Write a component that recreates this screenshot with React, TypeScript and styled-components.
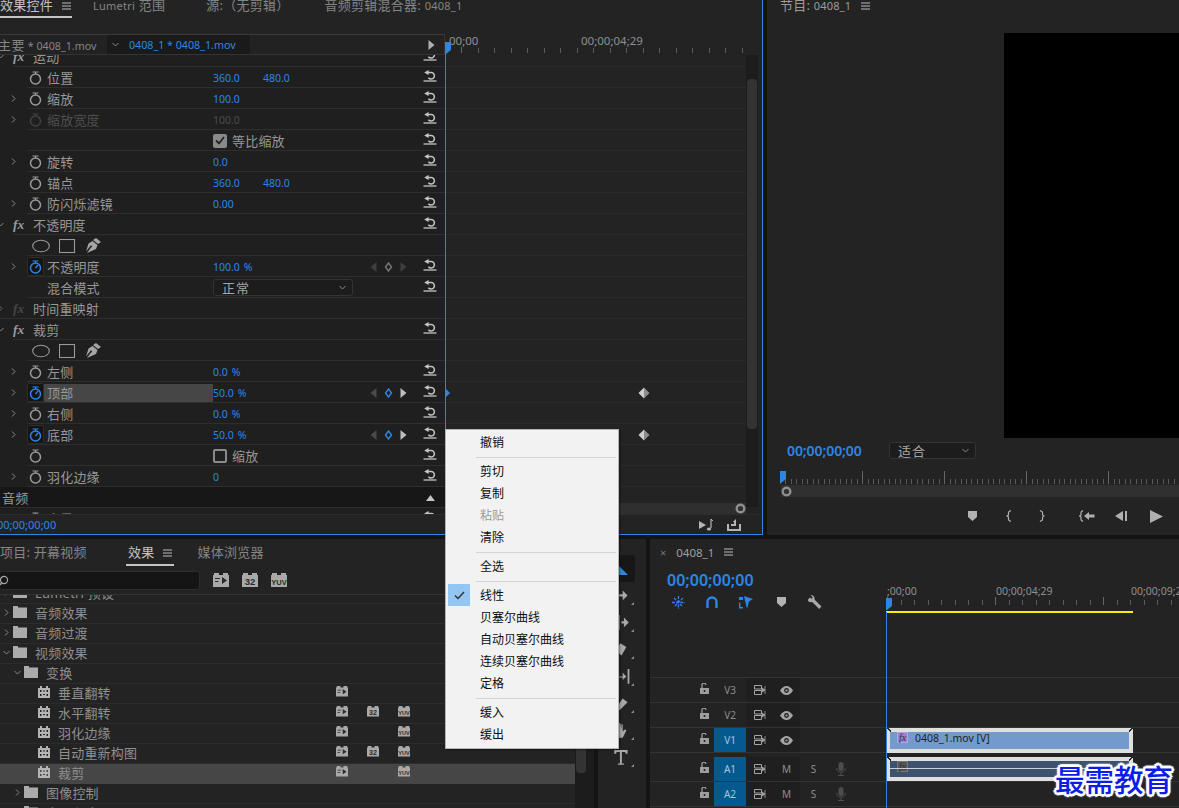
import React from "react";
import styled, { createGlobalStyle } from "styled-components";

const BLUE = "#2b86e6";

const Global = createGlobalStyle`
  html, body { margin: 0; padding: 0; background: #141414; overflow: hidden; }
  #root { width: 1179px; height: 808px; overflow: hidden; }
  * { box-sizing: border-box; }
`;

const Page = styled.div`
  position: relative;
  width: 1179px;
  height: 808px;
  overflow: hidden;
  background: #141414;
  color: #979797;
  font-family: "Noto Sans", "Noto Sans CJK SC", sans-serif;
  font-size: 13px;
  display: flex;
  flex-direction: column;
  gap: 4px;
`;
const TopRow = styled.div`
  display: flex;
  gap: 4px;
  height: 535px;
  flex: none;
`;
const BottomRow = styled.div`
  display: flex;
  gap: 4px;
  height: 269px;
  flex: none;
`;
const Panel = styled.section<{ $w?: number; $focus?: boolean }>`
  position: relative;
  display: flex;
  flex-direction: column;
  overflow: hidden;
  background: #232323;
  flex: ${(p) => (p.$w ? `0 0 ${p.$w}px` : "1 1 0")};
  ${(p) => (p.$focus ? `border-right: 1px solid ${BLUE}; border-bottom: 1px solid ${BLUE};` : "")}
`;

/* ---------- tabs ---------- */
const TabBar = styled.div<{ $h: number; $top: number }>`
  height: ${(p) => p.$h}px;
  flex: none;
  display: flex;
  align-items: flex-start;
  margin-top: ${(p) => p.$top}px;
  white-space: nowrap;
`;
const Tab = styled.div<{ $ml?: number; $on?: boolean; $pad?: number; $h?: number }>`
  display: flex;
  align-items: flex-start;
  gap: 9px;
  height: ${(p) => p.$h ?? 22}px;
  margin-left: ${(p) => p.$ml ?? 0}px;
  padding: 0 ${(p) => p.$pad ?? 0}px;
  font-size: 13px;
  line-height: 18px;
  letter-spacing: 0.25px;
  color: ${(p) => (p.$on ? "#c2c2c2" : "#858585")};
  border-bottom: 2px solid ${(p) => (p.$on ? "#c4c4c4" : "transparent")};
`;
const MiniNum = styled.span`
  font-size: 11px;
`;
const TabGlyph = styled.span`
  display: flex;
  padding-top: 6px;
`;
const MenuGlyph = () => (
  <svg width="9" height="8" viewBox="0 0 9 8">
    <path d="M0 1h9M0 4h9M0 7h9" stroke="#bdbdbd" strokeWidth="1" />
  </svg>
);

/* ---------- effect controls ---------- */
const FxBody = styled.div`
  flex: 1 1 0;
  min-height: 0;
  display: flex;
`;
const FxLeft = styled.div`
  width: 445px;
  flex: none;
  display: flex;
  flex-direction: column;
  background: #1f1f1f;
  overflow: hidden;
`;
const SourceHead = styled.div`
  height: 21px;
  flex: none;
  display: flex;
  align-items: center;
  background: #222;
  border-top: 1px solid #3a3a3a;
  border-bottom: 1px solid #333;
  border-right: 1px solid #333;
  white-space: nowrap;
`;
const SourceMaster = styled.div`
  width: 109px;
  flex: none;
  margin-left: -2px;
  color: #858585;
  font-size: 10.7px;
`;
const SourceCjk = styled.span`
  font-size: 13px;
  letter-spacing: 0.5px;
`;
const SourceActive = styled.div`
  width: 143px;
  height: 100%;
  flex: none;
  display: flex;
  align-items: center;
  gap: 10px;
  padding-left: 5px;
  background: #1a1a1a;
  color: ${BLUE};
  font-size: 10.7px;
`;
const HeadArrow = styled.div`
  margin-left: auto;
  margin-right: 9px;
  display: flex;
`;
const RowList = styled.div`
  flex: 1 1 0;
  min-height: 0;
  overflow: hidden;
`;
const RowScroll = styled.div`
  margin-top: -9px;
`;
const Row = styled.div<{ $inset: number; $dark?: boolean }>`
  height: 21px;
  display: flex;
  align-items: center;
  background: ${(p) => (p.$dark ? "#171717" : "transparent")}
    linear-gradient(#2e2e2e, #2e2e2e) right bottom / calc(100% - ${(p) => p.$inset}px) 1px no-repeat;
`;
const Lead = styled.div<{ $w: number }>`
  width: ${(p) => p.$w}px;
  flex: none;
  display: flex;
  align-items: center;
  justify-content: flex-end;
  padding-right: 10px;
`;
const SectionLead = styled.div`
  width: 30px;
  flex: none;
  display: flex;
  align-items: center;
  gap: 9px;
  margin-left: -3px;
`;
const FxMark = styled.span<{ $dim?: boolean }>`
  font-family: "Liberation Serif", serif;
  font-style: italic;
  font-weight: 700;
  font-size: 13.5px;
  line-height: 1;
  color: ${(p) => (p.$dim ? "#454545" : "#9a9a9a")};
`;
const SectionLabel = styled.div`
  flex: 1 1 0;
  font-size: 13px;
  letter-spacing: 0.2px;
  margin-left: 6px;
  color: #979797;
`;
const PlainLabel = styled.div`
  flex: 1 1 0;
  font-size: 13px;
  letter-spacing: 0.2px;
  margin-left: 2px;
  color: #979797;
`;
const WatchSlot = styled.div<{ $on?: boolean }>`
  width: 17px;
  height: 19px;
  flex: none;
  display: flex;
  align-items: center;
  justify-content: center;
  border-radius: 2px;
  background: ${(p) => (p.$on ? "#151515" : "transparent")};
  border: 1px solid ${(p) => (p.$on ? "#2c2c2c" : "transparent")};
`;
const PropLabel = styled.div<{ $hi?: boolean; $dim?: boolean }>`
  width: 169px;
  height: 18px;
  flex: none;
  padding-left: 3px;
  line-height: 18px;
  font-size: 13px;
  letter-spacing: 0.2px;
  background: ${(p) => (p.$hi ? "#464646" : "transparent")};
  color: ${(p) => (p.$dim ? "#4e4e4e" : "#979797")};
`;
const ValueCell = styled.div`
  flex: 1 1 0;
  display: flex;
  align-items: center;
  white-space: nowrap;
`;
const Value = styled.span<{ $w?: number; $dim?: boolean }>`
  display: inline-block;
  width: ${(p) => (p.$w ? `${p.$w}px` : "auto")};
  font-size: 10.5px;
  color: ${(p) => (p.$dim ? "#4b4b4b" : BLUE)};
`;
const Percent = styled.span`
  margin-left: 4px;
  font-size: 10.5px;
  color: ${BLUE};
`;
const CheckWrap = styled.div`
  display: flex;
  align-items: center;
  gap: 5px;
  font-size: 13px;
  letter-spacing: 0.2px;
  color: #979797;
`;
const CheckBox = styled.span<{ $on?: boolean }>`
  width: 14px;
  height: 14px;
  display: flex;
  align-items: center;
  justify-content: center;
  border: 2px solid #8a8a8a;
  border-radius: 2px;
  background: ${(p) => (p.$on ? "#8a8a8a" : "transparent")};
`;
const NavCell = styled.div`
  width: 50px;
  flex: none;
  display: flex;
  align-items: center;
  padding-left: 5px;
  gap: 7px;
`;
const ResetCell = styled.div`
  width: 30px;
  flex: none;
  display: flex;
  justify-content: center;
  padding-bottom: 4px;
`;
const UpCell = styled.div`
  width: 30px;
  flex: none;
  display: flex;
  justify-content: center;
`;
const MaskTools = styled.div`
  display: flex;
  align-items: center;
  gap: 9px;
  padding-left: 32px;
`;
const Select = styled.div<{ $w: number }>`
  width: ${(p) => p.$w}px;
  height: 17px;
  display: flex;
  align-items: center;
  justify-content: space-between;
  padding: 0 6px 0 8px;
  border: 1px solid #333;
  border-radius: 3px;
  background: #1c1c1c;
  font-size: 13px;
  letter-spacing: 1px;
  color: #a5a5a5;
`;
const FxRight = styled.div`
  position: relative;
  flex: 1 1 0;
  display: flex;
  flex-direction: column;
  min-width: 0;
`;
const SmallRuler = styled.div`
  height: 21px;
  flex: none;
  display: flex;
  flex-direction: column;
  overflow: hidden;
`;
const RulerLabels = styled.div<{ $pl: number; $size: number }>`
  display: flex;
  padding-left: ${(p) => p.$pl}px;
  height: 12px;
  margin-top: 1px;
  font-size: ${(p) => p.$size}px;
  line-height: 12px;
  color: #8f8f8f;
  white-space: nowrap;
`;
const RulerLabel = styled.span<{ $w: number }>`
  display: inline-block;
  width: ${(p) => p.$w}px;
  flex: none;
`;
const Lanes = styled.div`
  position: relative;
  flex: 1 1 0;
  min-height: 0;
  display: flex;
`;
const LaneGrid = styled.div`
  flex: 1 1 0;
  display: flex;
  flex-direction: column;
  background-image: linear-gradient(to bottom, transparent 20px, #2a2a2a 20px);
  background-size: 100% 21px;
  background-position: 0 -9px;
`;
const LaneSpace = styled.div`
  flex: 1 1 0;
`;
const HScroll = styled.div`
  height: 11px;
  flex: none;
  background: #2f2f2f;
  display: flex;
  align-items: center;
  justify-content: flex-end;
`;
const VTrack = styled.div`
  width: 12px;
  flex: none;
  margin: 0 4px 7px 0;
  padding: 24px 1px 0;
  background: #1c1c1c;
`;
const VThumb = styled.div`
  height: 350px;
  border-radius: 4px;
  background: #333;
`;
const Footer = styled.div`
  height: 20px;
  flex: none;
  display: flex;
  align-items: center;
  gap: 13px;
  padding-right: 21px;
  background: #232323;
  border-top: 1px solid #2c2c2c;
`;
const FootTime = styled.div`
  margin-left: -3px;
  font-size: 11px;
  color: ${BLUE};
  margin-right: auto;
`;
const Playhead = styled.div<{ $x: number; $top: number; $h: number }>`
  position: absolute;
  left: ${(p) => p.$x}px;
  top: ${(p) => p.$top}px;
  width: 1px;
  height: ${(p) => p.$h}px;
  background: ${BLUE};
`;
const Pinned = styled.div<{ $x: number; $y: number }>`
  position: absolute;
  left: ${(p) => p.$x}px;
  top: ${(p) => p.$y}px;
  display: flex;
`;

/* ---------- program ---------- */
const ProgTabs = styled.div`
  height: 33px;
  flex: none;
  display: flex;
  gap: 10px;
  padding: 0 0 0 13px;
  align-items: flex-start;
  font-size: 13px;
  color: #9c9c9c;
  line-height: 11px;
`;
const ProgTitle = styled.span`
  letter-spacing: 0.2px;
`;
const GlyphBox = styled.span`
  display: flex;
  padding-top: 2px;
`;
const Video = styled.div`
  height: 405px;
  flex: none;
  display: flex;
  justify-content: flex-end;
`;
const VideoBlack = styled.div`
  width: 175px;
  background: #000;
`;
const ProgControls = styled.div`
  height: 26px;
  flex: none;
  display: flex;
  align-items: center;
  gap: 26px;
  padding: 0 0 2px 20px;
`;
const ProgTime = styled.div`
  font-size: 14px;
  font-weight: 600;
  color: ${BLUE};
  width: 76px;
  white-space: nowrap;
  letter-spacing: -0.1px;
`;
const ProgRuler = styled.div`
  position: relative;
  height: 21px;
  flex: none;
  margin-left: 13px;
  overflow: hidden;
`;
const Scrub = styled.div`
  height: 12px;
  flex: none;
  margin-left: 14px;
  background: #303030;
  display: flex;
  align-items: center;
`;
const Transport = styled.div`
  flex: 1 1 0;
  display: flex;
  align-items: center;
  padding-left: 197px;
`;
const TransportBtn = styled.div<{ $ml: number }>`
  width: 16px;
  flex: none;
  margin-left: ${(p) => p.$ml}px;
  display: flex;
  justify-content: center;
`;

/* ---------- effects panel ---------- */
const SearchRow = styled.div`
  height: 27px;
  flex: none;
  display: flex;
  align-items: flex-start;
  gap: 13px;
  padding-top: 4px;
`;
const SearchBox = styled.div`
  width: 201px;
  height: 19px;
  margin-left: -1px;
  flex: none;
  display: flex;
  align-items: center;
  border: 1px solid #2c2c2c;
  border-radius: 3px;
  background: #151515;
`;
const BadgeGroup = styled.div`
  display: flex;
  gap: 13px;
  padding-top: 2px;
`;
const EffectsBody = styled.div`
  flex: 1 1 0;
  min-height: 0;
  display: flex;
  border-top: 1px solid #333;
`;
const EffectsList = styled.div`
  flex: 1 1 0;
  min-width: 0;
  overflow: hidden;
`;
const EffectsScroll = styled.div`
  margin-top: -11px;
`;
const ERow = styled.div<{ $sel?: boolean }>`
  height: 20px;
  display: flex;
  align-items: center;
  padding-bottom: 3px;
  background: ${(p) => (p.$sel ? "#464646" : "transparent")};
  border-bottom: 1px solid ${(p) => (p.$sel ? "#464646" : "#2c2c2c")};
`;
const EIndent = styled.div<{ $w: number }>`
  width: ${(p) => p.$w}px;
  flex: none;
  display: flex;
  align-items: center;
  justify-content: flex-end;
  padding-right: 3px;
`;
const EName = styled.div<{ $w: number }>`
  width: ${(p) => p.$w}px;
  flex: none;
  font-size: 13px;
  letter-spacing: 0.2px;
  padding-left: 8px;
  white-space: nowrap;
  overflow: hidden;
  color: #8f8f8f;
`;
const EBadges = styled.div`
  display: flex;
  gap: 19px;
`;
const BadgeSlot = styled.div`
  width: 12px;
  height: 12px;
  flex: none;
  display: flex;
`;
const EScrollTrack = styled.div`
  width: 19px;
  flex: none;
  padding: 0 8px 0 1px;
  background: #1c1c1c;
`;
const EThumb = styled.div`
  height: 178px;
  background: #333;
  border-radius: 0 0 4px 4px;
`;

/* ---------- tools ---------- */
const ToolColumn = styled.div`
  flex: 1 1 0;
  display: flex;
  flex-direction: column;
  align-items: center;
  padding: 17px 2px 0 0;
`;
const ToolButton = styled.div<{ $on?: boolean }>`
  position: relative;
  width: 28px;
  height: 27px;
  flex: none;
  display: flex;
  align-items: center;
  justify-content: center;
  border-radius: 3px;
  background: ${(p) => (p.$on ? "#171717" : "transparent")};
  margin-top: ${(p) => (p.$on ? -1 : 0)}px;
`;
const ToolCorner = styled.span`
  position: absolute;
  right: 1px;
  bottom: 4px;
  display: flex;
`;

/* ---------- timeline ---------- */
const SeqTab = styled.div`
  height: 29px;
  flex: none;
  display: flex;
  align-items: center;
  gap: 10px;
  padding: 0 0 3px 10px;
  font-size: 11.5px;
  color: #a0a0a0;
`;
const Close = styled.span`
  font-size: 11px;
  color: #777;
`;
const SeqHead = styled.div`
  height: 45px;
  flex: none;
  display: flex;
`;
const SeqLeft = styled.div`
  width: 236px;
  flex: none;
  display: flex;
  flex-direction: column;
  padding-left: 17px;
`;
const SeqTime = styled.div`
  font-size: 16px;
  font-weight: 600;
  line-height: 24px;
  color: ${BLUE};
`;
const SeqTools = styled.div`
  display: flex;
  align-items: center;
  height: 20px;
  padding-left: 4px;
`;
const SeqTool = styled.div<{ $w: number }>`
  width: ${(p) => p.$w}px;
  flex: none;
  display: flex;
`;
const SeqRuler = styled.div`
  flex: 1 1 0;
  display: flex;
  flex-direction: column;
  position: relative;
  min-width: 0;
  padding-top: 16px;
`;
const Yellow = styled.div`
  height: 2px;
  width: 247px;
  background: #f5ee00;
  margin-top: auto;
`;
const BlankTracks = styled.div`
  height: 65px;
  flex: none;
  border-bottom: 1px solid #333;
`;
const Track = styled.div<{ $gap?: boolean }>`
  height: 25px;
  flex: none;
  display: flex;
  border-bottom: 1px solid #333;
  margin-top: ${(p) => (p.$gap ? 4 : 0)}px;
`;
const TrackHead = styled.div`
  width: 236px;
  flex: none;
  display: flex;
  align-items: center;
`;
const LockSlot = styled.div`
  width: 64px;
  flex: none;
  display: flex;
  justify-content: flex-end;
  padding-right: 5px;
  padding-bottom: 3px;
`;
const TrackId = styled.div<{ $on?: boolean }>`
  width: 32px;
  height: 100%;
  flex: none;
  display: flex;
  align-items: center;
  justify-content: center;
  font-size: 10px;
  background: ${(p) => (p.$on ? "#045a8c" : "transparent")};
  color: ${(p) => (p.$on ? "#a9c4d6" : "#8c8c8c")};
`;
const TrackBtn = styled.div<{ $w: number; $dark?: boolean }>`
  width: ${(p) => p.$w}px;
  height: 100%;
  flex: none;
  display: flex;
  align-items: center;
  justify-content: center;
  font-size: 10px;
  color: #8f8f8f;
  background: ${(p) => (p.$dark ? "#1f1f1f" : "transparent")};
`;
const Lane = styled.div`
  flex: 1 1 0;
  min-width: 0;
  padding-left: 1px;
`;
const Clip = styled.div<{ $audio?: boolean }>`
  position: relative;
  width: 246px;
  height: ${(p) => (p.$audio ? 24 : 25)}px;
  display: flex;
  align-items: flex-start;
  gap: 7px;
  padding: 0 0 0 7px;
  border: solid #dfdfdf;
  border-width: 4px 4px 4px 3px;
  background: ${(p) => (p.$audio ? "#3d526f" : "#729bcb")};
  color: #222;
  font-size: 10.5px;
  line-height: 12px;
  &::before,
  &::after {
    content: "";
    position: absolute;
    top: -4px;
    width: 4px;
    height: 4px;
    background: linear-gradient(45deg, transparent 40%, #222 40%, #222 65%, transparent 65%);
  }
  &::before {
    left: -3px;
  }
  &::after {
    right: -4px;
    transform: scaleX(-1);
  }
`;
const ClipFx = styled.span<{ $audio?: boolean }>`
  width: 11px;
  height: 11px;
  flex: none;
  display: flex;
  align-items: center;
  justify-content: center;
  font-family: "Liberation Serif", serif;
  font-style: italic;
  font-size: 10px;
  color: #333;
  border: 1px solid ${(p) => (p.$audio ? "#777" : "#b9a5dc")};
  background: ${(p) => (p.$audio ? "#555" : "#a07fd0")};
`;
const Wave = styled.div`
  position: absolute;
  left: 0;
  right: 0;
  top: 7px;
  height: 1px;
  background: #c9d0da;
`;
const Watermark = styled.div`
  position: absolute;
  left: 1055px;
  top: 758px;
  font-family: "Noto Sans CJK SC", sans-serif;
  font-weight: 500;
  font-size: 29.5px;
  line-height: 40px;
  white-space: nowrap;
  color: #0b1de6;
  text-shadow: 2px 0 0 #fff, -2px 0 0 #fff, 0 2px 0 #fff, 0 -2px 0 #fff, 2px 2px 0 #fff, -2px -2px 0 #fff,
    2px -2px 0 #fff, -2px 2px 0 #fff, 3px 0 1px #fff, -3px 0 1px #fff, 0 3px 1px #fff, 0 -3px 1px #fff;
`;

/* ---------- context menu ---------- */
const Menu = styled.div`
  position: absolute;
  left: 445px;
  top: 429px;
  width: 174px;
  height: 320px;
  padding: 1px 0 3px 0;
  background: #f2f2f2;
  border: 1px solid #b5b5b5;
  box-shadow: 1px 1px 2px rgba(0, 0, 0, 0.4);
  font-family: "Noto Sans CJK SC", sans-serif;
  font-size: 12px;
  color: #0d0d0d;
`;
const MenuItem = styled.div<{ $off?: boolean }>`
  height: 22px;
  display: flex;
  align-items: center;
  gap: 10px;
  padding-left: 2px;
  color: ${(p) => (p.$off ? "#9a9a9a" : "#0d0d0d")};
`;
const MenuLabel = styled.span`
  margin-top: -1px;
`;
const MenuCheck = styled.span<{ $on?: boolean }>`
  width: 22px;
  height: 22px;
  flex: none;
  display: flex;
  align-items: center;
  justify-content: center;
  background: ${(p) => (p.$on ? "#94c6f4" : "transparent")};
`;
const MenuSep = styled.div`
  height: 7px;
  margin: 0 2px 0 30px;
  background: linear-gradient(#d5d5d5, #d5d5d5) 0 4px / 100% 1px no-repeat;
`;

/* ---------- icons ---------- */
const Chevron = ({ open, c = "#8a8a8a" }: { open?: boolean; c?: string }) => (
  <svg width="7" height="7" viewBox="0 0 7 7">
    <path d={open ? "M0.5 2l3 3 3-3" : "M2 0.5l3 3-3 3"} fill="none" stroke={c} strokeWidth="1" />
  </svg>
);
const Stopwatch = ({ on, dim }: { on?: boolean; dim?: boolean }) => {
  const c = on ? "#2b86e6" : dim ? "#414141" : "#9a9a9a";
  return (
    <svg width="13" height="14" viewBox="0 0 13 14">
      <circle cx="6.5" cy="8" r="5" fill="none" stroke={c} strokeWidth="1.5" />
      <path d="M3.5 1h6M6.5 1v2" stroke={c} strokeWidth="1.2" />
      {on && <path d="M6.5 8l2.5-3" stroke={c} strokeWidth="1.2" />}
    </svg>
  );
};
const Reset = () => (
  <svg width="14" height="12" viewBox="0 0 14 12">
    <path d="M5 2.500h3.200a3.300 3.300 0 1 1-2.800 5.200" fill="none" stroke="#c4c4c4" strokeWidth="1.500" />
    <path d="M5.600 0v5L1.200 2.500z" fill="#c4c4c4" />
    <path d="M0.500 11h13" stroke="#c4c4c4" strokeWidth="1.300" />
  </svg>
);
const Tri = ({ dir, c }: { dir: "l" | "r"; c: string }) => (
  <svg width="7" height="10" viewBox="0 0 7 10">
    <path d={dir === "l" ? "M6.5 0v10L0.5 5z" : "M0.5 0v10l6-5z"} fill={c} />
  </svg>
);
const DotDiamond = ({ blue }: { blue?: boolean }) => (
  <svg width="9" height="10" viewBox="0 0 9 10">
    <path d="M4.5 1l3 4-3 4-3-4z" fill="none" stroke={blue ? "#2b86e6" : "#777"} strokeWidth="1.4" />
  </svg>
);
const Keyframe = () => (
  <svg width="12" height="12" viewBox="0 0 12 12">
    <path d="M6 0.5L11.5 6 6 11.5z" fill="#8c8c8c" />
    <path d="M6 0.5L0.5 6 6 11.5z" fill="#cfcfcf" />
  </svg>
);
const Ellipse = () => (
  <svg width="18" height="14" viewBox="0 0 18 14">
    <ellipse cx="9" cy="7" rx="8.3" ry="5.8" fill="none" stroke="#9a9a9a" strokeWidth="1.1" />
  </svg>
);
const Rect = () => (
  <svg width="17" height="14" viewBox="0 0 17 14">
    <rect x="0.5" y="0.5" width="15" height="13" fill="none" stroke="#9a9a9a" strokeWidth="1.1" />
  </svg>
);
const Pen = () => (
  <svg width="17" height="17" viewBox="0 0 17 17">
    <path d="M11 1l5 4-3 2-5-4z M7.5 4l5 4-1.5 4-9 4 4-5.5a1 1 0 1 0 -1-1L1 14.5 3.5 6.5z" fill="#a5a5a5" />
  </svg>
);
const Folder = () => (
  <svg width="14" height="12" viewBox="0 0 14 12">
    <path d="M0 0h5v1.5h9V12H0z" fill="#ababab" />
  </svg>
);
const Film = () => (
  <svg width="12" height="12" viewBox="0 0 12 12">
    <path
      d="M2 0h2v2h4V0h2v2h2v10H0V2h2z M2 4v2h1.500V4z M2 8v2h1.500V8z M8.500 4v2H10V4z M8.500 8v2H10V8z M5 4.500v1h2v-1z M5 8v1h2V8z"
      fill="#b4b4b4"
      fillRule="evenodd"
    />
  </svg>
);
const Badge = ({ kind, s }: { kind: "a" | "32" | "y"; s: number }) => (
  <svg width={s} height={s * 0.875} viewBox="0 0 16 14">
    <path d="M0 2h1V0h5v2h4V0h5v2h1v12H0z" fill="#a9a9a9" />
    {kind === "a" && <path d="M9 4v7l5-3.5z M2 5h5v1H2z M2 8h3.5v1H2z" fill="#2a2a2a" />}
    {kind === "32" && (
      <text x="8" y="11.5" textAnchor="middle" fontSize="9.5" fontWeight="700" fontFamily="Liberation Sans" fill="#2a2a2a">
        32
      </text>
    )}
    {kind === "y" && (
      <text x="8" y="11.5" textAnchor="middle" fontSize="7.5" fontWeight="700" fontFamily="Liberation Sans" fill="#2a2a2a">
        YUV
      </text>
    )}
  </svg>
);
const Ticks = ({ w, h, step, major, start = 0, c = "#666" }: { w: number; h: number; step: number; major: number; start?: number; c?: string }) => {
  const lines = [];
  for (let i = 0; start + i * step < w; i++) {
    const x = Math.round(start + i * step) + 0.5;
    const big = i % major === 0;
    lines.push(<path key={i} d={`M${x} ${big ? 0 : h - 5}V${h}`} stroke={big ? "#666" : c} strokeWidth="1" />);
  }
  return (
    <svg width={w} height={h} viewBox={`0 0 ${w} ${h}`}>
      {lines}
    </svg>
  );
};
const HeadMark = () => (
  <svg width="6" height="12" viewBox="0 0 6 12">
    <path d="M0 0h6v8L1 12H0z" fill="#2b86e6" />
  </svg>
);
const Circle = () => (
  <svg width="11" height="11" viewBox="0 0 11 11">
    <circle cx="5.5" cy="5.5" r="3.8" fill="none" stroke="#8f8f8f" strokeWidth="2.4" />
  </svg>
);
const Marker = () => (
  <svg width="9" height="10" viewBox="0 0 9 10">
    <path d="M0 0h9v6l-4.500 4L0 6z" fill="#b2b2b2" />
  </svg>
);
const BraceL = () => (
  <svg width="7" height="12" viewBox="0 0 7 12">
    <path d="M5 0.5L2.5 2v3L1 6l1.5 1v3L5 11.5" fill="none" stroke="#b0b0b0" strokeWidth="1.2" />
  </svg>
);
const BraceR = () => (
  <svg width="7" height="12" viewBox="0 0 7 12">
    <path d="M2 0.5L4.5 2v3L6 6 4.5 7v3L2 11.5" fill="none" stroke="#b0b0b0" strokeWidth="1.2" />
  </svg>
);
const GoIn = () => (
  <svg width="16" height="12" viewBox="0 0 16 12">
    <path d="M4 0.5L2 2v3L0.7 6 2 7v3l2 1.5" fill="none" stroke="#b0b0b0" strokeWidth="1.2" />
    <path d="M5 6l5-4v2.600h5.500v2.800H10V10z" fill="#b0b0b0" />
  </svg>
);
const StepBack = () => (
  <svg width="13" height="10" viewBox="0 0 13 10">
    <path d="M8 0v10L0 5z" fill="#b0b0b0" />
    <path d="M10 0h2v10h-2z" fill="#b0b0b0" />
  </svg>
);
const Play = () => (
  <svg width="13" height="13" viewBox="0 0 13 13">
    <path d="M0 0l13 6.500L0 13z" fill="#b0b0b0" />
  </svg>
);
const Magnifier = () => (
  <svg width="10" height="12" viewBox="0 0 10 12">
    <circle cx="4" cy="5" r="3.600" fill="none" stroke="#a5a5a5" strokeWidth="1.200" />
    <path d="M1.500 8L0 10" stroke="#a5a5a5" strokeWidth="1.400" />
  </svg>
);
const PlayNote = () => (
  <svg width="15" height="12" viewBox="0 0 15 12">
    <path d="M0 2v8l7-4z" fill="#b5b5b5" />
    <path d="M12 0v9" stroke="#b5b5b5" strokeWidth="1.200" />
    <ellipse cx="10" cy="10" rx="2.200" ry="1.600" fill="#b5b5b5" />
    <path d="M12 0l2 2" stroke="#b5b5b5" />
  </svg>
);
const Export = () => (
  <svg width="14" height="12" viewBox="0 0 14 12">
    <path d="M0 5h2v5h10V5h2v7H0z" fill="#b5b5b5" />
    <path d="M4 5h3V3H5.800L9 0v7H4z" fill="#b5b5b5" />
  </svg>
);
const Lock = () => (
  <svg width="9" height="11" viewBox="0 0 9 11">
    <path d="M0 5h9v6H0z M3.700 7v2h1.600V7z" fill="#9e9e9e" fillRule="evenodd" />
    <path d="M2 5V2.500a2 2 0 0 1 4-.7" fill="none" stroke="#9e9e9e" strokeWidth="1.300" />
  </svg>
);
const Sync = () => (
  <svg width="12" height="10" viewBox="0 0 12 10">
    <path d="M0.500 0.500h7v3.500h-7z M0.500 5.500h7v4h-7z" fill="none" stroke="#a5a5a5" />
    <path d="M8 3l3 2-3 2z M11 1v8" fill="#a5a5a5" stroke="#a5a5a5" strokeWidth="0.800" />
  </svg>
);
const Eye = () => (
  <svg width="13" height="9" viewBox="0 0 13 9">
    <path d="M0 4.500C2 1.500 4 0 6.500 0S11 1.500 13 4.500C11 7.500 9 9 6.500 9S2 7.500 0 4.500z" fill="#a5a5a5" />
    <circle cx="6.500" cy="4.500" r="2.400" fill="#232323" />
    <circle cx="6.500" cy="4.500" r="1.100" fill="#a5a5a5" />
  </svg>
);
const Mic = () => (
  <svg width="10" height="14" viewBox="0 0 10 14">
    <rect x="2.500" y="0" width="5" height="9" rx="2.500" fill="#4d4d4d" />
    <path d="M0.700 6a4.300 4.300 0 0 0 8.600 0M5 10.500V13M2 13.500h6" fill="none" stroke="#4d4d4d" />
  </svg>
);
const Nest = () => (
  <svg width="15" height="13" viewBox="0 0 15 13">
    <path d="M1 6.500h13M7.500 0v13M3 2l9 9M12 2l-9 9" stroke={BLUE} strokeWidth="1.300" strokeDasharray="3 1.200" />
  </svg>
);
const Magnet = () => (
  <svg width="12" height="12" viewBox="0 0 12 12">
    <path d="M1.500 12V6a4.500 4.500 0 0 1 9 0v6" fill="none" stroke={BLUE} strokeWidth="2.400" />
  </svg>
);
const LinkSel = () => (
  <svg width="14" height="13" viewBox="0 0 14 13">
    <path d="M5 0l9 3-4 2.500L8 13z" fill={BLUE} />
    <path d="M0 1h4v3H0z M0 6.500h1.400V11H4v1.500H0z" fill={BLUE} />
  </svg>
);
const Wrench = () => (
  <svg width="15" height="15" viewBox="0 0 15 15">
    <path d="M1 4.500L3 2.500l2 1.500L5.500 1.800 3.500 0.500C6 -0.300 8 1.500 7.500 4.500L14.500 11.500l-2.300 2.500L5.200 7C2.700 7.500 0.700 6.500 1 4.500z" fill="#a8a8a8" />
  </svg>
);
const ToolTri = () => (
  <svg width="3" height="3" viewBox="0 0 3 3">
    <path d="M3 0v3H0z" fill="#8a8a8a" />
  </svg>
);
const ToolIcon = ({ n }: { n: number }) => {
  const paths = [
    "",
    "M0 5h8V2l4 4-4 4V7H0z",
    "M0 5h4V0h1.500v12H4V7H0z M7 5h2V2l4 4-4 4V7H7z",
    "M2 7l4-6 5 3-4 7z",
    "M0 6h8V3l3 3-3 3V7H0z M12 0h1.500v12H12z",
    "M3 9l5-7 4 3-6 6-4 2z",
    "M2 8L1 4l2 2V1h1l1 4V0h1l1 5V1h1v6l2-2 1 1-3 6H4z",
    "M1 0h11v3h-1.500L10 1.500H7.300V11H9v1H4v-1h1.700V1.500H3L2.500 3H1z",
  ];
  return (
    <svg width="17" height="16" viewBox="0 0 14 13">
      <path d={paths[n]} fill="#a8a8a8" />
    </svg>
  );
};
const SelectArrow = () => (
  <svg width="14" height="14" viewBox="0 0 14 14">
    <path d="M1 0l13 13H1z" fill={BLUE} />
  </svg>
);

/* ---------- data ---------- */
type PropRow = {
  kind: "prop" | "section" | "mask" | "check" | "blend" | "plain";
  label?: string;
  chev?: boolean;
  open?: boolean;
  on?: boolean;
  hi?: boolean;
  dim?: boolean;
  vals?: string[];
  pct?: boolean;
  nav?: "blue" | "gray";
  noWatch?: boolean;
  checked?: boolean;
  noReset?: boolean;
};

const rows: PropRow[] = [
  { kind: "section", label: "运动", open: true },
  { kind: "prop", label: "位置", vals: ["360.0", "480.0"] },
  { kind: "prop", label: "缩放", chev: true, vals: ["100.0"] },
  { kind: "prop", label: "缩放宽度", chev: true, dim: true, vals: ["100.0"] },
  { kind: "check", label: "等比缩放", checked: true, noWatch: true },
  { kind: "prop", label: "旋转", chev: true, vals: ["0.0"] },
  { kind: "prop", label: "锚点", vals: ["360.0", "480.0"] },
  { kind: "prop", label: "防闪烁滤镜", chev: true, vals: ["0.00"] },
  { kind: "section", label: "不透明度", open: true },
  { kind: "mask" },
  { kind: "prop", label: "不透明度", chev: true, on: true, vals: ["100.0"], pct: true, nav: "gray" },
  { kind: "blend", label: "混合模式" },
  { kind: "section", label: "时间重映射", dim: true, noReset: true },
  { kind: "section", label: "裁剪", open: true },
  { kind: "mask" },
  { kind: "prop", label: "左侧", chev: true, vals: ["0.0"], pct: true },
  { kind: "prop", label: "顶部", chev: true, on: true, hi: true, vals: ["50.0"], pct: true, nav: "blue" },
  { kind: "prop", label: "右侧", chev: true, vals: ["0.0"], pct: true },
  { kind: "prop", label: "底部", chev: true, on: true, vals: ["50.0"], pct: true, nav: "blue" },
  { kind: "check", label: "缩放" },
  { kind: "prop", label: "羽化边缘", chev: true, vals: ["0"] },
  { kind: "plain", label: "音频" },
  { kind: "prop", label: "音量", vals: [] },
];

const EffectRow = ({ r }: { r: PropRow }) => {
  if (r.kind === "plain")
    return (
      <Row $inset={0} $dark>
        <PlainLabel>{r.label}</PlainLabel>
        <UpCell>
          <svg width="9" height="6" viewBox="0 0 9 6">
            <path d="M4.500 0L9 6H0z" fill="#c4c4c4" />
          </svg>
        </UpCell>
      </Row>
    );
  if (r.kind === "section")
    return (
      <Row $inset={r.dim ? 0 : 13}>
        <SectionLead>
          <Chevron open={r.open} c={r.dim ? "#666" : "#8a8a8a"} />
          <FxMark $dim={r.dim}>fx</FxMark>
        </SectionLead>
        <SectionLabel>{r.label}</SectionLabel>
        {!r.noReset && (
          <ResetCell>
            <Reset />
          </ResetCell>
        )}
      </Row>
    );
  if (r.kind === "mask")
    return (
      <Row $inset={27}>
        <MaskTools>
          <Ellipse />
          <Rect />
          <Pen />
        </MaskTools>
      </Row>
    );
  return (
    <Row $inset={27}>
      <Lead $w={27}>{r.chev && <Chevron />}</Lead>
      <WatchSlot $on={r.on}>{!r.noWatch && r.kind !== "blend" && <Stopwatch on={r.on} dim={r.dim} />}</WatchSlot>
      <PropLabel $hi={r.hi} $dim={r.dim}>
        {r.kind === "check" ? "" : r.label}
      </PropLabel>
      <ValueCell>
        {r.kind === "check" && (
          <CheckWrap>
            <CheckBox $on={r.checked}>
              {r.checked && (
                <svg width="10" height="9" viewBox="0 0 10 9">
                  <path d="M1 4.500l3 3 5-6.500" fill="none" stroke="#222" strokeWidth="1.800" />
                </svg>
              )}
            </CheckBox>
            {r.label}
          </CheckWrap>
        )}
        {r.kind === "blend" && (
          <Select $w={140}>
            正常
            <Chevron open />
          </Select>
        )}
        {r.vals?.map((v, i) => (
          <Value key={i} $w={r.vals!.length > 1 ? 50 : 0} $dim={r.dim}>
            {v}
          </Value>
        ))}
        {r.pct && <Percent>%</Percent>}
      </ValueCell>
      {r.nav && (
        <NavCell>
          <Tri dir="l" c={r.nav === "blue" ? "#4a4a4a" : "#3f3f3f"} />
          <DotDiamond blue={r.nav === "blue"} />
          <Tri dir="r" c={r.nav === "blue" ? "#bdbdbd" : "#3f3f3f"} />
        </NavCell>
      )}
      <ResetCell>
        <Reset />
      </ResetCell>
    </Row>
  );
};

type ERowData = {
  label: string;
  level: 0 | 1 | 2;
  open?: boolean;
  sel?: boolean;
  badges?: ("a" | "32" | "y" | "")[];
};
const eRows: ERowData[] = [
  { label: "Lumetri 预设", level: 0 },
  { label: "音频效果", level: 0 },
  { label: "音频过渡", level: 0 },
  { label: "视频效果", level: 0, open: true },
  { label: "变换", level: 1, open: true },
  { label: "垂直翻转", level: 2, badges: ["a", "", ""] },
  { label: "水平翻转", level: 2, badges: ["a", "32", "y"] },
  { label: "羽化边缘", level: 2, badges: ["a", "", "y"] },
  { label: "自动重新构图", level: 2, badges: ["a", "32", "y"] },
  { label: "裁剪", level: 2, sel: true, badges: ["a", "", "y"] },
  { label: "图像控制", level: 1 },
  { label: "实用程序", level: 1 },
];
const EffectItem = ({ r }: { r: ERowData }) => {
  const indent = r.level === 0 ? 13 : r.level === 1 ? 24 : 38;
  const nameW = 336 - indent - (r.level === 2 ? 12 : 14);
  return (
    <ERow $sel={r.sel}>
      <EIndent $w={indent}>{r.level < 2 && <Chevron open={r.open} />}</EIndent>
      {r.level === 2 ? <Film /> : <Folder />}
      <EName $w={nameW}>{r.label}</EName>
      {r.badges && (
        <EBadges>
          {r.badges.map((b, i) => (
            <BadgeSlot key={i}>{b && <Badge kind={b} s={12} />}</BadgeSlot>
          ))}
        </EBadges>
      )}
    </ERow>
  );
};

const tracks = [
  { id: "V3", v: true },
  { id: "V2", v: true },
  { id: "V1", v: true, on: true },
  { id: "A1", on: true, gap: true },
  { id: "A2", on: true },
];

const menu: (string | { t: string; off?: boolean; on?: boolean } | null)[] = [
  "撤销",
  null,
  "剪切",
  "复制",
  { t: "粘贴", off: true },
  "清除",
  null,
  "全选",
  null,
  { t: "线性", on: true },
  "贝塞尔曲线",
  "自动贝塞尔曲线",
  "连续贝塞尔曲线",
  "定格",
  null,
  "缓入",
  "缓出",
];

export default function App() {
  return (
    <Page>
      <Global />
      <TopRow>
        <Panel $w={763} $focus>
          <TabBar $h={38} $top={-4}>
            <Tab $on $ml={-1} $pad={1}>
              效果控件
              <TabGlyph>
                <MenuGlyph />
              </TabGlyph>
            </Tab>
            <Tab $ml={21}>
              <span>
                <MiniNum>Lumetri</MiniNum> 范围
              </span>
            </Tab>
            <Tab $ml={41}>源:（无剪辑）</Tab>
            <Tab $ml={35}>
              <span>
                音频剪辑混合器: <MiniNum>0408_1</MiniNum>
              </span>
            </Tab>
          </TabBar>
          <FxBody>
            <FxLeft>
              <SourceHead>
                <SourceMaster>
                  <SourceCjk>主要</SourceCjk> * 0408_1.mov
                </SourceMaster>
                <SourceActive>
                  <Chevron open />
                  0408_1 * 0408_1.mov
                </SourceActive>
                <HeadArrow>
                  <Tri dir="r" c="#b0b0b0" />
                </HeadArrow>
              </SourceHead>
              <RowList>
                <RowScroll>
                  {rows.map((r, i) => (
                    <EffectRow key={i} r={r} />
                  ))}
                </RowScroll>
              </RowList>
            </FxLeft>
            <FxRight>
              <SmallRuler>
                <RulerLabels $pl={4} $size={11.5}>
                  <RulerLabel $w={132}>00;00</RulerLabel>
                  <RulerLabel $w={80}>00;00;04;29</RulerLabel>
                </RulerLabels>
                <Ticks w={305} h={6} step={16.5} major={100} start={16} c="#5c5c5c" />
              </SmallRuler>
              <Lanes>
                <LaneGrid>
                  <LaneSpace />
                  <HScroll>
                    <Circle />
                  </HScroll>
                </LaneGrid>
                <VTrack>
                  <VThumb />
                </VTrack>
                <Pinned $x={193} $y={332}>
                  <Keyframe />
                </Pinned>
                <Pinned $x={193} $y={374}>
                  <Keyframe />
                </Pinned>
                <Pinned $x={0} $y={333}>
                  <svg width="5" height="10" viewBox="0 0 5 10">
                    <path d="M0 0l5 5-5 5z" fill={BLUE} />
                  </svg>
                </Pinned>
              </Lanes>
              <Playhead $x={0} $top={12} $h={470} />
              <Pinned $x={0} $y={8}>
                <HeadMark />
              </Pinned>
            </FxRight>
          </FxBody>
          <Footer>
            <FootTime>00;00;00;00</FootTime>
            <PlayNote />
            <Export />
          </Footer>
        </Panel>
        <Panel>
          <ProgTabs>
            <ProgTitle>
              节目: <MiniNum>0408_1</MiniNum>
            </ProgTitle>
            <GlyphBox>
              <MenuGlyph />
            </GlyphBox>
          </ProgTabs>
          <Video>
            <VideoBlack />
          </Video>
          <ProgControls>
            <ProgTime>00;00;00;00</ProgTime>
            <Select $w={87}>
              适合
              <Chevron open />
            </Select>
          </ProgControls>
          <ProgRuler>
            <Pinned $x={0} $y={7}>
              <Ticks w={400} h={13} step={5.47} major={15} c="#5a5a5a" />
            </Pinned>
            <Pinned $x={0} $y={7}>
              <HeadMark />
            </Pinned>
          </ProgRuler>
          <Scrub>
            <Circle />
          </Scrub>
          <Transport>
            <TransportBtn $ml={0}>
              <Marker />
            </TransportBtn>
            <TransportBtn $ml={21}>
              <BraceL />
            </TransportBtn>
            <TransportBtn $ml={16}>
              <BraceR />
            </TransportBtn>
            <TransportBtn $ml={30}>
              <GoIn />
            </TransportBtn>
            <TransportBtn $ml={18}>
              <StepBack />
            </TransportBtn>
            <TransportBtn $ml={19}>
              <Play />
            </TransportBtn>
          </Transport>
        </Panel>
      </TopRow>
      <BottomRow>
        <Panel $w={594}>
          <TabBar $h={24} $top={4}>
            <Tab>项目: 开幕视频</Tab>
            <Tab $on $ml={39} $pad={2} $h={23}>
              效果
              <TabGlyph>
                <MenuGlyph />
              </TabGlyph>
            </Tab>
            <Tab $ml={23}>媒体浏览器</Tab>
          </TabBar>
          <SearchRow>
            <SearchBox>
              <Magnifier />
            </SearchBox>
            <BadgeGroup>
              <Badge kind="a" s={16} />
              <Badge kind="32" s={16} />
              <Badge kind="y" s={16} />
            </BadgeGroup>
          </SearchRow>
          <EffectsBody>
            <EffectsList>
              <EffectsScroll>
                {eRows.map((r, i) => (
                  <EffectItem key={i} r={r} />
                ))}
              </EffectsScroll>
            </EffectsList>
            <EScrollTrack>
              <EThumb />
            </EScrollTrack>
          </EffectsBody>
        </Panel>
        <Panel $w={48}>
          <ToolColumn>
            <ToolButton $on>
              <SelectArrow />
            </ToolButton>
            {[1, 2, 3, 4, 5, 6, 7].map((n) => (
              <ToolButton key={n}>
                <ToolIcon n={n} />
                <ToolCorner>
                  <ToolTri />
                </ToolCorner>
              </ToolButton>
            ))}
          </ToolColumn>
        </Panel>
        <Panel>
          <SeqTab>
            <Close>×</Close>
            0408_1
            <MenuGlyph />
          </SeqTab>
          <SeqHead>
            <SeqLeft>
              <SeqTime>00;00;00;00</SeqTime>
              <SeqTools>
                <SeqTool $w={35}>
                  <Nest />
                </SeqTool>
                <SeqTool $w={33}>
                  <Magnet />
                </SeqTool>
                <SeqTool $w={38}>
                  <LinkSel />
                </SeqTool>
                <SeqTool $w={30}>
                  <Marker />
                </SeqTool>
                <SeqTool $w={20}>
                  <Wrench />
                </SeqTool>
              </SeqTools>
            </SeqLeft>
            <SeqRuler>
              <RulerLabels $pl={1} $size={10.5}>
                <RulerLabel $w={109}>;00;00</RulerLabel>
                <RulerLabel $w={135}>00;00;04;29</RulerLabel>
                <RulerLabel $w={60}>00;00;09;29</RulerLabel>
              </RulerLabels>
              <Ticks w={293} h={8} step={13.5} major={8} start={1} c="#5c5c5c" />
              <Yellow />
              <Pinned $x={0} $y={30}>
                <HeadMark />
              </Pinned>
            </SeqRuler>
          </SeqHead>
          <BlankTracks />
          {tracks.map((t) => (
            <Track key={t.id} $gap={t.gap}>
              <TrackHead>
                <LockSlot>
                  <Lock />
                </LockSlot>
                <TrackId $on={t.on}>{t.id}</TrackId>
                <TrackBtn $w={27} $dark>
                  <Sync />
                </TrackBtn>
                {t.v ? (
                  <TrackBtn $w={27} $dark>
                    <Eye />
                  </TrackBtn>
                ) : (
                  <>
                    <TrackBtn $w={27} $dark>
                      M
                    </TrackBtn>
                    <TrackBtn $w={27}>S</TrackBtn>
                    <TrackBtn $w={27}>
                      <Mic />
                    </TrackBtn>
                  </>
                )}
              </TrackHead>
              <Lane>
                {t.id === "V1" && (
                  <Clip>
                    <ClipFx>fx</ClipFx>
                    0408_1.mov [V]
                  </Clip>
                )}
                {t.id === "A1" && (
                  <Clip $audio>
                    <Wave />
                    <ClipFx $audio>fx</ClipFx>
                  </Clip>
                )}
              </Lane>
            </Track>
          ))}
          <Playhead $x={236} $top={73} $h={196} />
        </Panel>
      </BottomRow>
      <Menu>
        {menu.map((m, i) =>
          m === null ? (
            <MenuSep key={i} />
          ) : typeof m === "string" ? (
            <MenuItem key={i}>
              <MenuCheck />
              <MenuLabel>{m}</MenuLabel>
            </MenuItem>
          ) : (
            <MenuItem key={i} $off={m.off}>
              <MenuCheck $on={m.on}>
                {m.on && (
                  <svg width="11" height="9" viewBox="0 0 11 9">
                    <path d="M1 4.500l3 3 6-6.500" fill="none" stroke="#333" strokeWidth="1.500" />
                  </svg>
                )}
              </MenuCheck>
              <MenuLabel>{m.t}</MenuLabel>
            </MenuItem>
          )
        )}
      </Menu>
      <Watermark>最需教育</Watermark>
    </Page>
  );
}
